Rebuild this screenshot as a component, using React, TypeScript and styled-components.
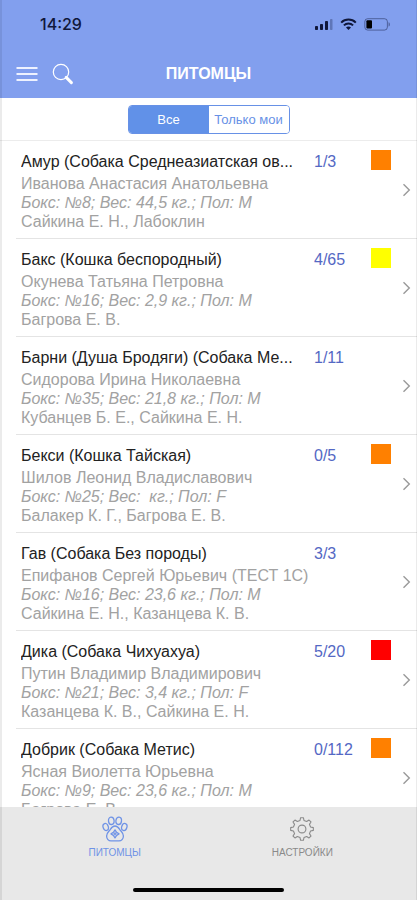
import React, { useState } from "react";
import styled, { createGlobalStyle } from "styled-components";

const GlobalStyle = createGlobalStyle`
  *, *::before, *::after { box-sizing: border-box; }
  html, body { margin: 0; padding: 0; background: #fff; }
  body { font-family: "Liberation Sans", Arial, sans-serif; }
  button { font-family: inherit; margin: 0; padding: 0; border: 0; background: none; cursor: pointer; }
`;

const Screen = styled.div`
  position: relative;
  display: flex;
  flex-direction: column;
  height: 100vh;
  overflow: hidden;
  background: #fff;

  &::after {
    content: "";
    position: absolute;
    inset: 0;
    border: solid rgba(0, 0, 0, 0.08);
    border-width: 0 1px 0 2px;
    pointer-events: none;
  }
`;

const Header = styled.header`
  flex: none;
  background: #829fee;
`;

const StatusBar = styled.div`
  display: flex;
  align-items: center;
  justify-content: space-between;
  height: 48px;
  padding: 0 26px 0 40px;
`;

const Clock = styled.time`
  font-family: Inter, "Liberation Sans", sans-serif;
  font-size: 16px;
  font-weight: 500;
  color: #10173a;
`;

const StatusIcons = styled.div`
  display: flex;
  align-items: center;
  gap: 7px;
`;

const TitleBar = styled.div`
  display: grid;
  grid-template-columns: 1fr auto 1fr;
  align-items: center;
  height: 50px;
  padding: 1px 16px 0;
`;

const Actions = styled.div`
  display: flex;
  align-items: center;
  gap: 14px;
`;

const IconButton = styled.button`
  display: flex;
`;

const Title = styled.h1`
  margin: 0;
  font-size: 16px;
  line-height: 20px;
  font-weight: 700;
  color: #fff;
`;

const FilterBar = styled.div`
  flex: none;
  display: flex;
  justify-content: center;
  align-items: flex-start;
  height: 43px;
  padding-top: 7px;
  border-bottom: 1px solid #ececec;
`;

const Segments = styled.div`
  display: grid;
  grid-template-columns: 1fr 1fr;
  width: 162px;
  height: 29px;
  border: 1px solid #6791e6;
  border-radius: 4px;
  overflow: hidden;
`;

const Segment = styled.button<{ $active: boolean }>`
  font-size: 13px;
  line-height: 16px;
  white-space: nowrap;
  color: ${(p) => (p.$active ? "#fff" : "#6791e6")};
  background: ${(p) => (p.$active ? "#6191e8" : "#fff")};
`;

const List = styled.ul`
  flex: 1;
  min-height: 0;
  margin: 0;
  padding: 0;
  list-style: none;
  overflow: hidden;
`;

const Item = styled.li`
  margin-left: 16px;
  border-bottom: 1px solid #e4e4e4;
`;

const Row = styled.button`
  display: flex;
  align-items: center;
  width: 100%;
  height: 97px;
  padding: 0 6px 0 5px;
  text-align: left;
`;

const Body = styled.span`
  flex: 1;
  min-width: 0;
  align-self: flex-start;
  padding-top: 9px;
`;

const Headline = styled.span`
  display: flex;
  gap: 16px;
  height: 24px;
  line-height: 24px;
  font-size: 16px;
`;

const Name = styled.span`
  flex: 1;
  min-width: 0;
  overflow: hidden;
  text-overflow: ellipsis;
  white-space: nowrap;
  color: #222;
`;

const Count = styled.span`
  width: 57px;
  color: #5468c4;
`;

const Detail = styled.span<{ $italic?: boolean }>`
  display: block;
  font-size: 16px;
  line-height: 19px;
  white-space: pre;
  color: #a2a2a2;
  font-style: ${(p) => (p.$italic ? "italic" : "normal")};
`;

const Marker = styled.span<{ $color?: string }>`
  flex: none;
  align-self: flex-start;
  width: 20px;
  height: 20px;
  margin: 9px 11px 0 0;
  background: ${(p) => p.$color ?? "transparent"};
`;

const TabBar = styled.footer`
  flex: none;
  display: flex;
  flex-direction: column;
  align-items: center;
  justify-content: space-between;
  height: 93px;
  padding: 9px 0 8px;
  background: #e8e8e8;
`;

const Tabs = styled.nav`
  display: grid;
  grid-template-columns: 1fr 1fr;
  width: 90%;
`;

const Tab = styled.button<{ $active: boolean }>`
  display: flex;
  flex-direction: column;
  align-items: center;
  gap: 4px;
  font-size: 10px;
  line-height: 14px;
  color: ${(p) => (p.$active ? "#6f93e6" : "#8a8a8a")};
`;

const HomeIndicator = styled.div`
  width: 36%;
  height: 4px;
  border-radius: 2px;
  background: #000;
`;

const SignalIcon = () => (
  <svg width="19" height="13" viewBox="0 0 19 13" fill="#10173a" aria-hidden="true">
    <rect x="1" y="8" width="3" height="4" rx="0.8" />
    <rect x="6" y="6" width="3" height="6" rx="0.8" />
    <rect x="11" y="3" width="3" height="9" rx="0.8" />
    <rect x="16" y="1" width="2.5" height="11" rx="0.8" opacity="0.3" />
  </svg>
);

const WifiIcon = () => (
  <svg width="17" height="13" viewBox="0 0 17 13" fill="none" stroke="#10173a" strokeWidth="2" aria-hidden="true">
    <path d="M1.2 4.6C5.2 0.6 11.8 0.6 15.8 4.6" />
    <path d="M3.9 7.4C6.5 4.9 10.5 4.9 13.1 7.4" />
    <path d="M8.5 12L6 9.5C7.4 8.3 9.6 8.3 11 9.5Z" fill="#10173a" stroke="none" />
  </svg>
);

const BatteryIcon = () => (
  <svg width="27" height="13" viewBox="0 0 27 13" aria-hidden="true">
    <rect x="0.8" y="0.7" width="22.6" height="11.4" rx="3" fill="none" stroke="#10173a" strokeOpacity="0.45" />
    <rect x="2.4" y="2.2" width="5.6" height="8.4" rx="1" fill="#000" />
    <path d="M24.6 4.2C26.2 4.8 26.2 8 24.6 8.6Z" fill="#10173a" opacity="0.5" />
  </svg>
);

const MenuIcon = () => (
  <svg width="22" height="16" viewBox="0 0 22 16" stroke="#eef2ff" strokeWidth="2" aria-hidden="true">
    <path d="M0.5 2H21.5M0.5 8H21.5M0.5 14H21.5" />
  </svg>
);

const SearchIcon = () => (
  <svg width="22" height="22" viewBox="0 0 22 22" fill="none" stroke="#fff" aria-hidden="true">
    <circle cx="9" cy="9" r="7.7" strokeWidth="1.2" />
    <path d="M14.2 14.4L19.4 19.6" strokeWidth="3" strokeLinecap="round" />
  </svg>
);

const ChevronIcon = () => (
  <svg width="9" height="14" viewBox="0 0 9 14" fill="none" stroke="#9a9a9a" strokeWidth="1.4" aria-hidden="true">
    <path d="M1.5 1.2L7.3 7L1.5 12.8" />
  </svg>
);

const PawIcon = () => (
  <svg width="26" height="26" viewBox="0 0 26 26" fill="none" stroke="#6f93e6" strokeWidth="1.3" strokeLinejoin="round" aria-hidden="true">
    <ellipse cx="9.3" cy="4.8" rx="2.8" ry="3.7" transform="rotate(-6 9.3 4.8)" />
    <ellipse cx="16.7" cy="4.8" rx="2.8" ry="3.7" transform="rotate(6 16.7 4.8)" />
    <ellipse cx="3.7" cy="11" rx="2.6" ry="3.6" transform="rotate(-18 3.7 11)" />
    <ellipse cx="22.3" cy="11" rx="2.6" ry="3.6" transform="rotate(18 22.3 11)" />
    <path d="M13 10C10.2 10 9.2 12 8 13.8C6.6 15.8 4.6 17 4.6 20C4.6 22.8 6.6 24.8 9 24.8H17C19.4 24.8 21.4 22.8 21.4 20C21.4 17 19.4 15.8 18 13.8C16.8 12 15.8 10 13 10Z" />
    <path d="M13 13.9L14.6 16.3L17 17.9L14.6 19.5L13 21.9L11.4 19.5L9 17.9L11.4 16.3Z" />
    <path d="M13 16.2V19.6M11.3 17.9H14.7" />
  </svg>
);

const TEETH = Array.from({ length: 8 }, (_, i) => {
  const point = (radius: number, degrees: number) => {
    const a = ((i * 45 + degrees - 90) * Math.PI) / 180;
    return `${(13 + radius * Math.cos(a)).toFixed(2)} ${(13 + radius * Math.sin(a)).toFixed(2)}`;
  };
  return [point(8.8, -13), point(11.4, -7), point(11.4, 7), point(8.8, 13)].join("L");
}).join("L");

const GearIcon = () => (
  <svg width="26" height="26" viewBox="0 0 26 26" fill="none" stroke="#8a8a8a" strokeWidth="1.1" strokeLinejoin="round" aria-hidden="true">
    <path d={`M${TEETH}Z`} />
    <circle cx="13" cy="13" r="3.9" />
  </svg>
);

type Pet = { name: string; count: string; owner: string; info: string; doctors: string; color?: string };

const PETS: Pet[] = [
  { name: "Амур (Собака Среднеазиатская ов...", count: "1/3", owner: "Иванова Анастасия Анатольевна", info: "Бокс: №8; Вес: 44,5 кг.; Пол: M", doctors: "Сайкина Е. Н., Лабоклин", color: "#ff8000" },
  { name: "Бакс (Кошка беспородный)", count: "4/65", owner: "Окунева Татьяна Петровна", info: "Бокс: №16; Вес: 2,9 кг.; Пол: M", doctors: "Багрова Е. В.", color: "#ffff00" },
  { name: "Барни (Душа Бродяги) (Собака Ме...", count: "1/11", owner: "Сидорова Ирина Николаевна", info: "Бокс: №35; Вес: 21,8 кг.; Пол: M", doctors: "Кубанцев Б. Е., Сайкина Е. Н." },
  { name: "Бекси (Кошка Тайская)", count: "0/5", owner: "Шилов Леонид Владиславович", info: "Бокс: №25; Вес:  кг.; Пол: F", doctors: "Балакер К. Г., Багрова Е. В.", color: "#ff8000" },
  { name: "Гав (Собака Без породы)", count: "3/3", owner: "Епифанов Сергей Юрьевич (ТЕСТ 1С)", info: "Бокс: №16; Вес: 23,6 кг.; Пол: M", doctors: "Сайкина Е. Н., Казанцева К. В." },
  { name: "Дика (Собака Чихуахуа)", count: "5/20", owner: "Путин Владимир Владимирович", info: "Бокс: №21; Вес: 3,4 кг.; Пол: F", doctors: "Казанцева К. В., Сайкина Е. Н.", color: "#ff0000" },
  { name: "Добрик (Собака Метис)", count: "0/112", owner: "Ясная Виолетта Юрьевна", info: "Бокс: №9; Вес: 23,6 кг.; Пол: M", doctors: "Багрова Е. В.", color: "#ff8000" },
];

const FILTERS = ["Все", "Только мои"];

export default function App() {
  const [filter, setFilter] = useState(FILTERS[0]);
  return (
    <Screen>
      <GlobalStyle />
      <Header>
        <StatusBar>
          <Clock>14:29</Clock>
          <StatusIcons>
            <SignalIcon />
            <WifiIcon />
            <BatteryIcon />
          </StatusIcons>
        </StatusBar>
        <TitleBar>
          <Actions>
            <IconButton aria-label="Меню"><MenuIcon /></IconButton>
            <IconButton aria-label="Поиск"><SearchIcon /></IconButton>
          </Actions>
          <Title>ПИТОМЦЫ</Title>
        </TitleBar>
      </Header>
      <FilterBar>
        <Segments role="group">
          {FILTERS.map((label) => (
            <Segment key={label} $active={filter === label} aria-pressed={filter === label} onClick={() => setFilter(label)}>
              {label}
            </Segment>
          ))}
        </Segments>
      </FilterBar>
      <List>
        {PETS.map((pet) => (
          <Item key={pet.name}>
            <Row>
              <Body>
                <Headline>
                  <Name>{pet.name}</Name>
                  <Count>{pet.count}</Count>
                </Headline>
                <Detail>{pet.owner}</Detail>
                <Detail $italic>{pet.info}</Detail>
                <Detail>{pet.doctors}</Detail>
              </Body>
              <Marker $color={pet.color} />
              <ChevronIcon />
            </Row>
          </Item>
        ))}
      </List>
      <TabBar>
        <Tabs>
          <Tab $active><PawIcon />ПИТОМЦЫ</Tab>
          <Tab $active={false}><GearIcon />НАСТРОЙКИ</Tab>
        </Tabs>
        <HomeIndicator />
      </TabBar>
    </Screen>
  );
}
